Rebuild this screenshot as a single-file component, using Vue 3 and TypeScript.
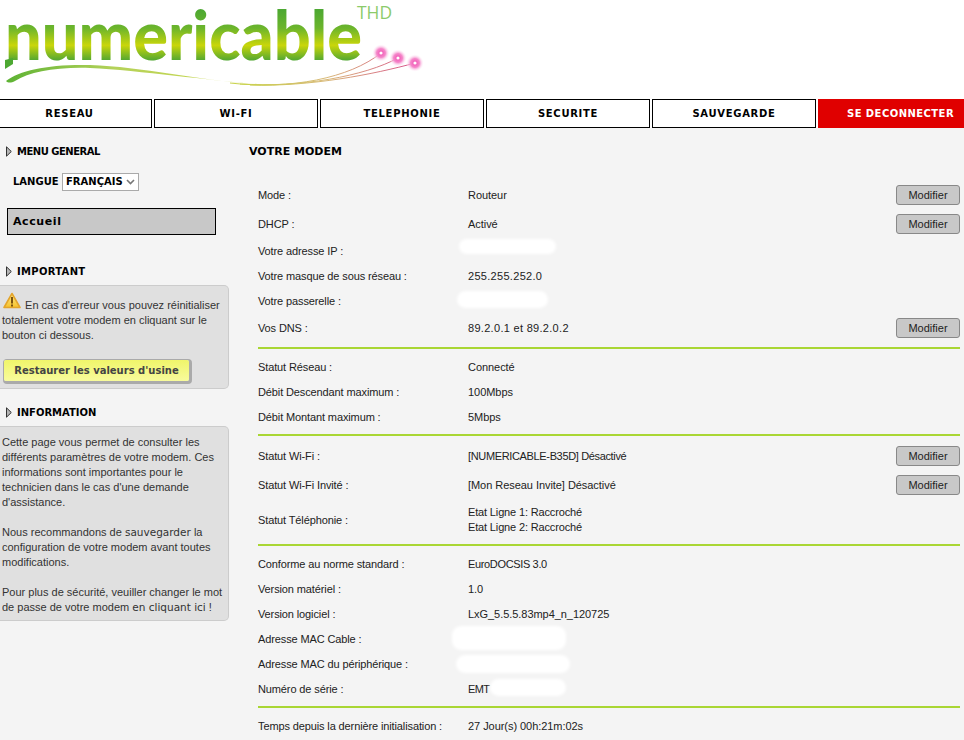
<script setup lang="ts">
interface Row { label: string; value?: string; lines?: string[]; btn?: boolean; cls?: string; ls?: string }
const nav = ['RESEAU', 'WI-FI', 'TELEPHONIE', 'SECURITE', 'SAUVEGARDE', 'SE DECONNECTER']
const groups: Row[][] = [
  [
    { label: 'Mode :', value: 'Routeur', btn: true },
    { label: 'DHCP :', value: 'Activé', btn: true },
    { label: 'Votre adresse IP :', cls: 'ip' },
    { label: 'Votre masque de sous réseau :', value: '255.255.252.0', ls: 'num' },
    { label: 'Votre passerelle :', cls: 'gw' },
    { label: 'Vos DNS :', value: '89.2.0.1 et 89.2.0.2', btn: true, ls: 'num' },
  ],
  [
    { label: 'Statut Réseau :', value: 'Connecté' },
    { label: 'Débit Descendant maximum :', value: '100Mbps' },
    { label: 'Débit Montant maximum :', value: '5Mbps' },
  ],
  [
    { label: 'Statut Wi-Fi :', value: '[NUMERICABLE-B35D] Désactivé', btn: true, ls: 'tight' },
    { label: 'Statut Wi-Fi Invité :', value: '[Mon Reseau Invite] Désactivé', btn: true },
    { label: 'Statut Téléphonie :', lines: ['Etat Ligne 1: Raccroché', 'Etat Ligne 2: Raccroché'] },
  ],
  [
    { label: 'Conforme au norme standard :', value: 'EuroDOCSIS 3.0', ls: 'tight' },
    { label: 'Version matériel :', value: '1.0' },
    { label: 'Version logiciel :', value: 'LxG_5.5.5.83mp4_n_120725' },
    { label: 'Adresse MAC Cable :', cls: 'mac1' },
    { label: 'Adresse MAC du périphérique :', cls: 'mac2' },
    { label: 'Numéro de série :', value: 'EMT', cls: 'sn' },
  ],
  [{ label: 'Temps depuis la dernière initialisation :', value: '27 Jour(s) 00h:21m:02s' }],
]
</script>

<template>
  <div class="page">
    <header class="logo-bar">
      <svg class="logo" width="440" height="98" viewBox="0 0 440 98">
        <defs>
          <linearGradient id="lg" x1="0" y1="10" x2="0" y2="62" gradientUnits="userSpaceOnUse">
            <stop offset="0" stop-color="#4da832" />
            <stop offset=".35" stop-color="#6cb52c" />
            <stop offset=".68" stop-color="#c9d60a" />
            <stop offset="1" stop-color="#46a236" />
          </linearGradient>
          <linearGradient id="sw" x1="5" y1="0" x2="280" y2="0" gradientUnits="userSpaceOnUse">
            <stop offset="0" stop-color="#5cb233" />
            <stop offset=".4" stop-color="#b5d25a" />
            <stop offset="1" stop-color="#d2d94a" />
          </linearGradient>
          <linearGradient id="fil" x1="240" y1="0" x2="415" y2="0" gradientUnits="userSpaceOnUse">
            <stop offset="0" stop-color="#c8d24a" />
            <stop offset=".5" stop-color="#d8b878" />
            <stop offset="1" stop-color="#d8508c" />
          </linearGradient>
          <linearGradient id="wg" x1="0" y1="0" x2="0" y2="1">
            <stop offset="0" stop-color="#ffe98a" />
            <stop offset="1" stop-color="#f6c22a" />
          </linearGradient>
          <radialGradient id="glow">
            <stop offset="0" stop-color="#f04ab0" />
            <stop offset=".5" stop-color="#f58acb" />
            <stop offset="1" stop-color="#ffffff" stop-opacity="0" />
          </radialGradient>
        </defs>
        <text x="5" y="60" class="logo-word" textLength="357" lengthAdjust="spacingAndGlyphs" fill="url(#lg)">numericable</text>
        <path d="M5 60 L5 69 L13 64 L13 58 Z" fill="#4da832" />
        <text x="357" y="19" class="logo-thd" textLength="35" lengthAdjust="spacingAndGlyphs">THD</text>
        <path d="M6 81 C20 70 50 64 90 65 C150 67 210 84 280 85 C240 85 150 71 90 68 C55 67 30 72 15 81 C11 83 8 83 6 81 Z" fill="url(#sw)" />
        <g fill="none" stroke="url(#fil)" stroke-width="1">
          <path d="M230 83 C290 90 350 78 381 53" />
          <path d="M240 84 C300 88 365 76 398 58" />
          <path d="M250 85 C310 87 375 74 415 63" />
        </g>
        <g>
          <circle cx="381" cy="53" r="9" fill="url(#glow)" />
          <circle cx="398" cy="58" r="9" fill="url(#glow)" />
          <circle cx="415" cy="63" r="9" fill="url(#glow)" />
          <circle cx="381" cy="53" r="1.6" fill="#fff" />
          <circle cx="398" cy="58" r="1.6" fill="#fff" />
          <circle cx="415" cy="63" r="1.6" fill="#fff" />
        </g>
      </svg>
    </header>

    <nav class="nav">
      <a v-for="(item, i) in nav" :key="item" class="nav-item" :class="{ logout: i === 5, first: i === 0 }">{{ item }}</a>
    </nav>

    <div class="columns">
      <aside class="side">
        <h3 class="head first-head">
          <svg class="tri" width="6" height="11" viewBox="0 0 6 11"><path d="M.5 .8 L5.3 5.5 L.5 10.2 Z" fill="#b5b5b5" stroke="#333" stroke-width="1" /></svg>MENU GENERAL
        </h3>
        <div class="lang">
          <span class="lang-label">LANGUE</span>
          <span class="select">FRANÇAIS
            <svg width="9" height="6" viewBox="0 0 9 6"><path d="M1 1 L4.5 4.5 L8 1" fill="none" stroke="#777" stroke-width="1.6" /></svg>
          </span>
        </div>
        <div class="home">Accueil</div>

        <h3 class="head imp-head">
          <svg class="tri" width="6" height="11" viewBox="0 0 6 11"><path d="M.5 .8 L5.3 5.5 L.5 10.2 Z" fill="#b5b5b5" stroke="#333" stroke-width="1" /></svg>IMPORTANT
        </h3>
        <div class="box box-imp">
          <p>
            <svg class="warn" width="18" height="17" viewBox="0 0 18 17">
              <path d="M9 1.5 L17 15.5 L1 15.5 Z" fill="url(#wg)" stroke="#e3a52c" stroke-width="1.6" stroke-linejoin="round" />
              <rect x="8" y="5" width="2" height="6.5" fill="#7a5310" />
              <rect x="8" y="12.5" width="2" height="2" fill="#7a5310" />
            </svg>
            En cas d'erreur vous pouvez réinitialiser totalement votre modem en cliquant sur le bouton ci dessous.
          </p>
          <button class="restore">Restaurer les valeurs d'usine</button>
        </div>

        <h3 class="head info-head">
          <svg class="tri" width="6" height="11" viewBox="0 0 6 11"><path d="M.5 .8 L5.3 5.5 L.5 10.2 Z" fill="#b5b5b5" stroke="#333" stroke-width="1" /></svg>INFORMATION
        </h3>
        <div class="box box-info">
          <p>Cette page vous permet de consulter les différents paramètres de votre modem. Ces informations sont importantes pour le technicien dans le cas d'une demande d'assistance.</p>
          <p>Nous recommandons de <span class="wide">sauvegarder</span> la configuration de votre modem avant toutes modifications.</p>
          <p>Pour plus de sécurité, veuiller changer le mot de passe de votre modem <span class="wide">en cliquant ici</span> !</p>
        </div>
      </aside>

      <main class="main">
        <h2 class="title">VOTRE MODEM</h2>
        <section v-for="(g, gi) in groups" :key="gi" class="group">
          <div v-for="r in g" :key="r.label" class="row" :class="{ tall: r.btn, phone: r.lines }">
            <span class="label">{{ r.label }}</span>
            <span class="value" :class="[r.cls, r.ls]">
              <template v-if="r.lines"><span v-for="l in r.lines" :key="l" class="line">{{ l }}</span></template>
              <template v-else>{{ r.value }}</template>
              <i v-if="r.cls" class="blob"></i>
            </span>
            <button v-if="r.btn" class="mod">Modifier</button>
          </div>
        </section>
      </main>
    </div>
  </div>
</template>

<style>
html, body { margin: 0; background: #f4f4f4; }
</style>

<style scoped>
.page { width: 964px; height: 740px; overflow: hidden; background: #f4f4f4; font-family: "Liberation Sans", Arial, sans-serif; font-size: 11px; color: #222; }
.logo-bar { height: 99px; background: #fff; }
.logo { display: block; }
.logo-word { font-family: Lato, sans-serif; font-weight: 900; font-size: 68px; }
.logo-thd { font-family: "Open Sans", sans-serif; font-size: 19px; fill: #8ccb6a; }
.nav { display: grid; grid-template-columns: 152px repeat(4, 164px) 146px; column-gap: 2px; height: 29px; background: #fff; }
.nav-item { display: flex; align-items: center; justify-content: center; white-space: nowrap; border: 1px solid #000; background: #fff; font-family: "DejaVu Sans", sans-serif; font-weight: 700; font-size: 10px; letter-spacing: .7px; color: #000; }
.nav-item.first { border-left: 0; padding-right: 12px; }
.nav-item.logout { background: #e00000; color: #fff; border-color: #e00000; padding-left: 28px; justify-content: flex-start; letter-spacing: .45px; }
.columns { display: flex; }
.side { width: 229px; flex: none; }
.head { display: flex; align-items: center; margin: 0; padding-left: 6px; height: 14px; font-family: "DejaVu Sans", sans-serif; font-weight: 700; font-size: 10px; color: #000; }
.first-head { margin-top: 16px; letter-spacing: -.5px; }
.tri { flex: none; margin-right: 5px; }
.lang { display: flex; align-items: center; margin: 15px 0 0 13px; height: 17px; }
.lang-label { width: 49px; font-family: "DejaVu Sans", sans-serif; font-weight: 700; font-size: 10px; color: #000; }
.select { display: flex; align-items: center; justify-content: space-between; box-sizing: border-box; width: 77px; height: 18px; padding: 0 3px 0 3px; border: 1px solid #aaa; background: #fff; font-family: "DejaVu Sans", sans-serif; font-weight: 700; font-size: 10px; color: #000; }
.home { box-sizing: border-box; width: 209px; height: 27px; margin: 18px 0 0 7px; padding-left: 5px; line-height: 25px; border: 1px solid #000; background: #c8c8c8; font-family: "DejaVu Sans", sans-serif; font-weight: 700; font-size: 11px; letter-spacing: .6px; color: #000; }
.imp-head { margin-top: 29px; letter-spacing: .3px; }
.info-head { margin-top: 16px; }
.box { box-sizing: border-box; width: 229px; border: 1px solid #ccc; border-left: 0; border-radius: 0 5px 5px 0; background: #e0e0e0; color: #333; line-height: 15px; padding: 0 4px 0 2px; }
.box p { margin: 0; }
.box-imp { margin-top: 7px; height: 104px; padding-top: 9px; }
.warn { vertical-align: -3px; margin: 0 1px 0 1px; transform: translateY(-3px); }
.restore { display: block; box-sizing: border-box; width: 185px; height: 21px; margin: 17px 0 0 2px; padding: 0; border: 0; border-radius: 2px; background: linear-gradient(#f0f56a, #f8fb9c); box-shadow: 1px 1px 0 2px #aaa; font-family: "DejaVu Sans", sans-serif; font-weight: 700; font-size: 10px; color: #444; }
.box-info { margin-top: 7px; height: 195px; padding-top: 8px; }
.box-info p + p { margin-top: 15px; }
.wide { font-family: "DejaVu Sans", sans-serif; font-size: 10.5px; }
.main { flex: 1; padding: 0 4px 0 29px; }
.title { margin: 0 0 22px -9px; padding-top: 17px; height: 14px; font-family: "DejaVu Sans", sans-serif; font-weight: 700; font-size: 11px; color: #000; }
.group { border-bottom: 2px solid #a9d633; padding-bottom: 4px; margin-bottom: 6px; }
.group:last-child { border-bottom: 0; }
.row { display: flex; align-items: center; height: 25px; line-height: 13px; }
.row.tall { height: 29px; }
.row.phone { height: 40px; }
.label { width: 210px; flex: none; letter-spacing: -.12px; }
.value { flex: 1; position: relative; min-height: 13px; letter-spacing: -.05px; }
.value.num { letter-spacing: .3px; }
.value.tight { letter-spacing: -.35px; }
.value.sn { letter-spacing: -.6px; }
.line { display: block; line-height: 15px; letter-spacing: -.15px; }
.mod { box-sizing: border-box; width: 64px; height: 20px; margin-bottom: 1px; padding: 0; border: 1px solid #888; border-radius: 3px; background: #c8c8c8; font: inherit; color: #222; }
.blob { position: absolute; background: #fff; border-radius: 9px; filter: blur(1.5px); }
.ip .blob { left: -9px; top: -6px; width: 97px; height: 15px; }
.gw .blob { left: -11px; top: -4px; width: 91px; height: 17px; }
.mac1 .blob { left: -16px; top: -7px; width: 114px; height: 24px; }
.mac2 .blob { left: -12px; top: -3px; width: 114px; height: 18px; }
.sn .blob { left: 22px; top: -4px; width: 76px; height: 17px; }
</style>
